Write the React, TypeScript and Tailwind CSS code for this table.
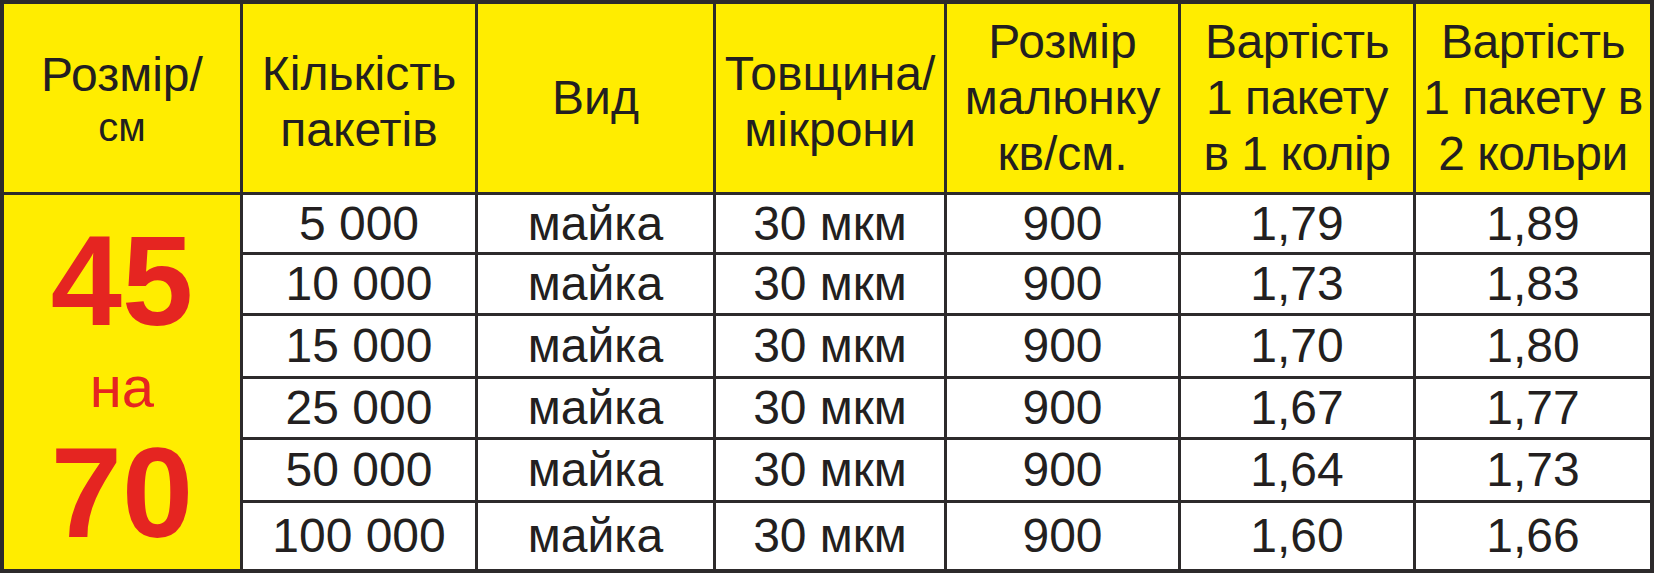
import { Fragment } from "react"

const rows = [
  { qty: "5 000", one: "1,79", two: "1,89" },
  { qty: "10 000", one: "1,73", two: "1,83" },
  { qty: "15 000", one: "1,70", two: "1,80" },
  { qty: "25 000", one: "1,67", two: "1,77" },
  { qty: "50 000", one: "1,64", two: "1,73" },
  { qty: "100 000", one: "1,60", two: "1,66" },
]

const head =
  "bg-[#FFED00] flex flex-col items-center justify-center text-center text-[48px] leading-[56px] whitespace-nowrap"
const cell = "bg-white flex items-center justify-center text-[48px] leading-none whitespace-nowrap"

export default function App() {
  return (
    <div className="w-[1654px] h-[573px] bg-white font-['Liberation_Sans',Arial,sans-serif] text-[#231F20]">
      <div className="grid grid-cols-[236px_232px_235px_228px_231px_232px_234px] grid-rows-[188px_57px_58px_60px_58px_60px_66px] gap-[3px] p-[4px] bg-[#2d2a2b]">
        {/* header */}
        <div className={`${head} pt-[9px]`}>
          <span className="text-[48px] leading-[48px]">Розмір/</span>
          <span className="text-[40px] leading-[56px]">см</span>
        </div>
        <div className={`${head} pt-[8px]`}>
          <span>Кількість</span>
          <span>пакетів</span>
        </div>
        <div className={head}>
          <span>Вид</span>
        </div>
        <div className={`${head} pt-[8px]`}>
          <span>Товщина/</span>
          <span>мікрони</span>
        </div>
        <div className={head}>
          <span>Розмір</span>
          <span>малюнку</span>
          <span>кв/см.</span>
        </div>
        <div className={`${head} tracking-[-0.5px]`}>
          <span>Вартість</span>
          <span>1 пакету</span>
          <span>в 1 колір</span>
        </div>
        <div className={`${head} tracking-[-0.5px]`}>
          <span>Вартість</span>
          <span>1 пакету в</span>
          <span>2 кольри</span>
        </div>

        {/* size cell spanning all data rows */}
        <div className="row-span-6 bg-[#FFED00] flex flex-col items-center justify-center gap-[13px] pt-[9px] text-[#E52521]">
          <span className="text-[128px] leading-[128px] font-bold">45</span>
          <span className="text-[58px] leading-[58px]">на</span>
          <span className="text-[128px] leading-[128px] font-bold">70</span>
        </div>

        {rows.map((r) => (
          <Fragment key={r.qty}>
            <div className={cell}>{r.qty}</div>
            <div className={cell}>майка</div>
            <div className={cell}>30 мкм</div>
            <div className={cell}>900</div>
            <div className={cell}>{r.one}</div>
            <div className={cell}>{r.two}</div>
          </Fragment>
        ))}
      </div>
    </div>
  )
}
